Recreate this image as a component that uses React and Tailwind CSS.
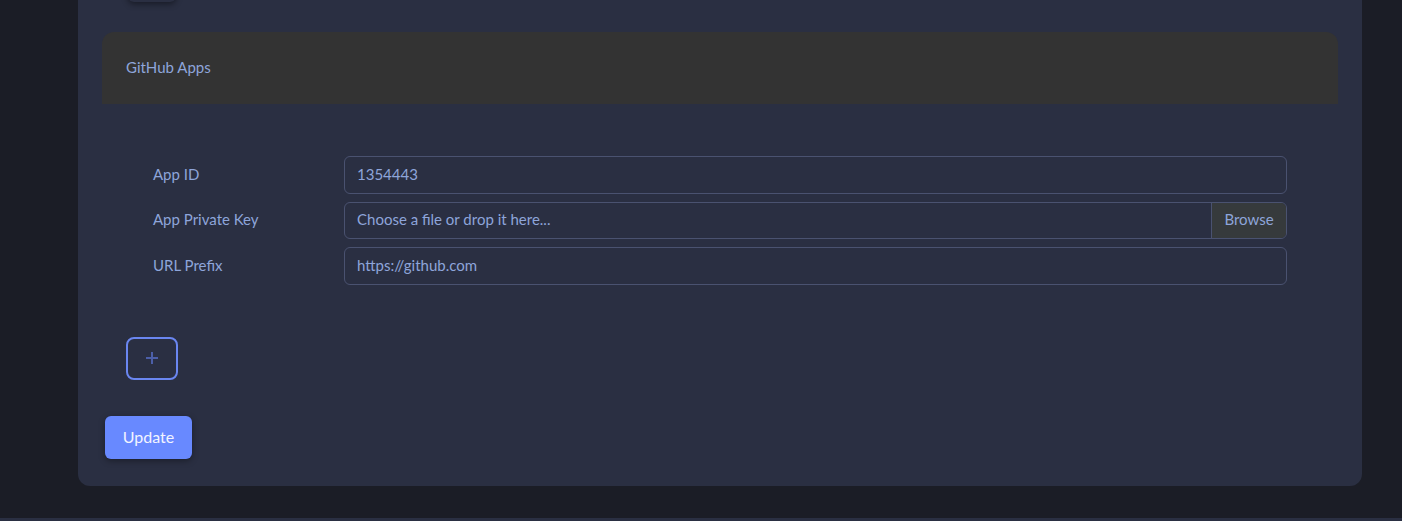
import React from 'react';

const font = { fontFamily: 'Lato, "Noto Sans", sans-serif' };

function Field({ label, children }) {
  return (
    <div className="flex items-center">
      <label className="w-[191px] shrink-0 text-[15px] leading-5 pb-[2px] text-[#8ea5da]">{label}</label>
      <div className="flex-1">{children}</div>
    </div>
  );
}

export default function App() {
  return (
    <div className="min-h-[521px] bg-[#1b1d26] flex flex-col" style={font}>
      <div className="ml-[78px] mr-[40px] bg-[#2a2f42] rounded-b-xl px-6 pb-[27px]">
        {/* shadow of the control cut off above */}
        <div className="ml-[26px] w-[48px] h-[40px] -mt-[38px] rounded-md shadow-[0_2px_6px_rgba(0,0,0,0.45)] bg-[#2a2f42]" />

        <div className="mt-[30px] bg-[#333333] rounded-t-xl h-[72px] flex items-center px-6 pb-[2px]">
          <span className="text-[15px] text-[#8ea5da]">GitHub Apps</span>
        </div>

        <div className="px-[51px] pt-[52px] flex flex-col gap-2">
          <Field label="App ID">
            <div className="h-[37.5px] border border-[#4a5270] rounded-md flex items-center px-3 pb-[2px] text-[15px] text-[#8ea5da]">
              1354443
            </div>
          </Field>
          <Field label="App Private Key">
            <div className="h-[37.5px] border border-[#4a5270] rounded-md flex overflow-hidden">
              <div className="flex-1 flex items-center px-3 pb-[2px] text-[15px] text-[#8ea5da]">
                Choose a file or drop it here...
              </div>
              <div className="w-[75px] border-l border-[#4a5270] bg-[#363a3c] flex items-center justify-center pb-[2px] text-[15px] text-[#8ea5da]">
                Browse
              </div>
            </div>
          </Field>
          <Field label="URL Prefix">
            <div className="h-[37.5px] border border-[#4a5270] rounded-md flex items-center px-3 pb-[2px] text-[15px] text-[#8ea5da]">
              https://github.com
            </div>
          </Field>
        </div>

        <button className="block mt-[52px] ml-6 w-[52px] h-[43px] border-2 border-[#6a86f0] rounded-lg flex items-center justify-center text-[#4c5fa8]">
          <svg width="14" height="14" viewBox="0 0 14 14" fill="none" stroke="currentColor" strokeWidth="2">
            <path d="M7 1v12M1 7h12" />
          </svg>
        </button>

        <button className="block mt-[36px] ml-[3px] w-[87px] h-[43px] bg-[#6889ff] rounded-md text-[16px] text-[#f2f4ff] shadow-[0_2px_6px_rgba(0,0,0,0.35)]">
          Update
        </button>
      </div>
      <div className="flex-1" />
      <div className="h-[3px] bg-[#2a2f42]" />
    </div>
  );
}
